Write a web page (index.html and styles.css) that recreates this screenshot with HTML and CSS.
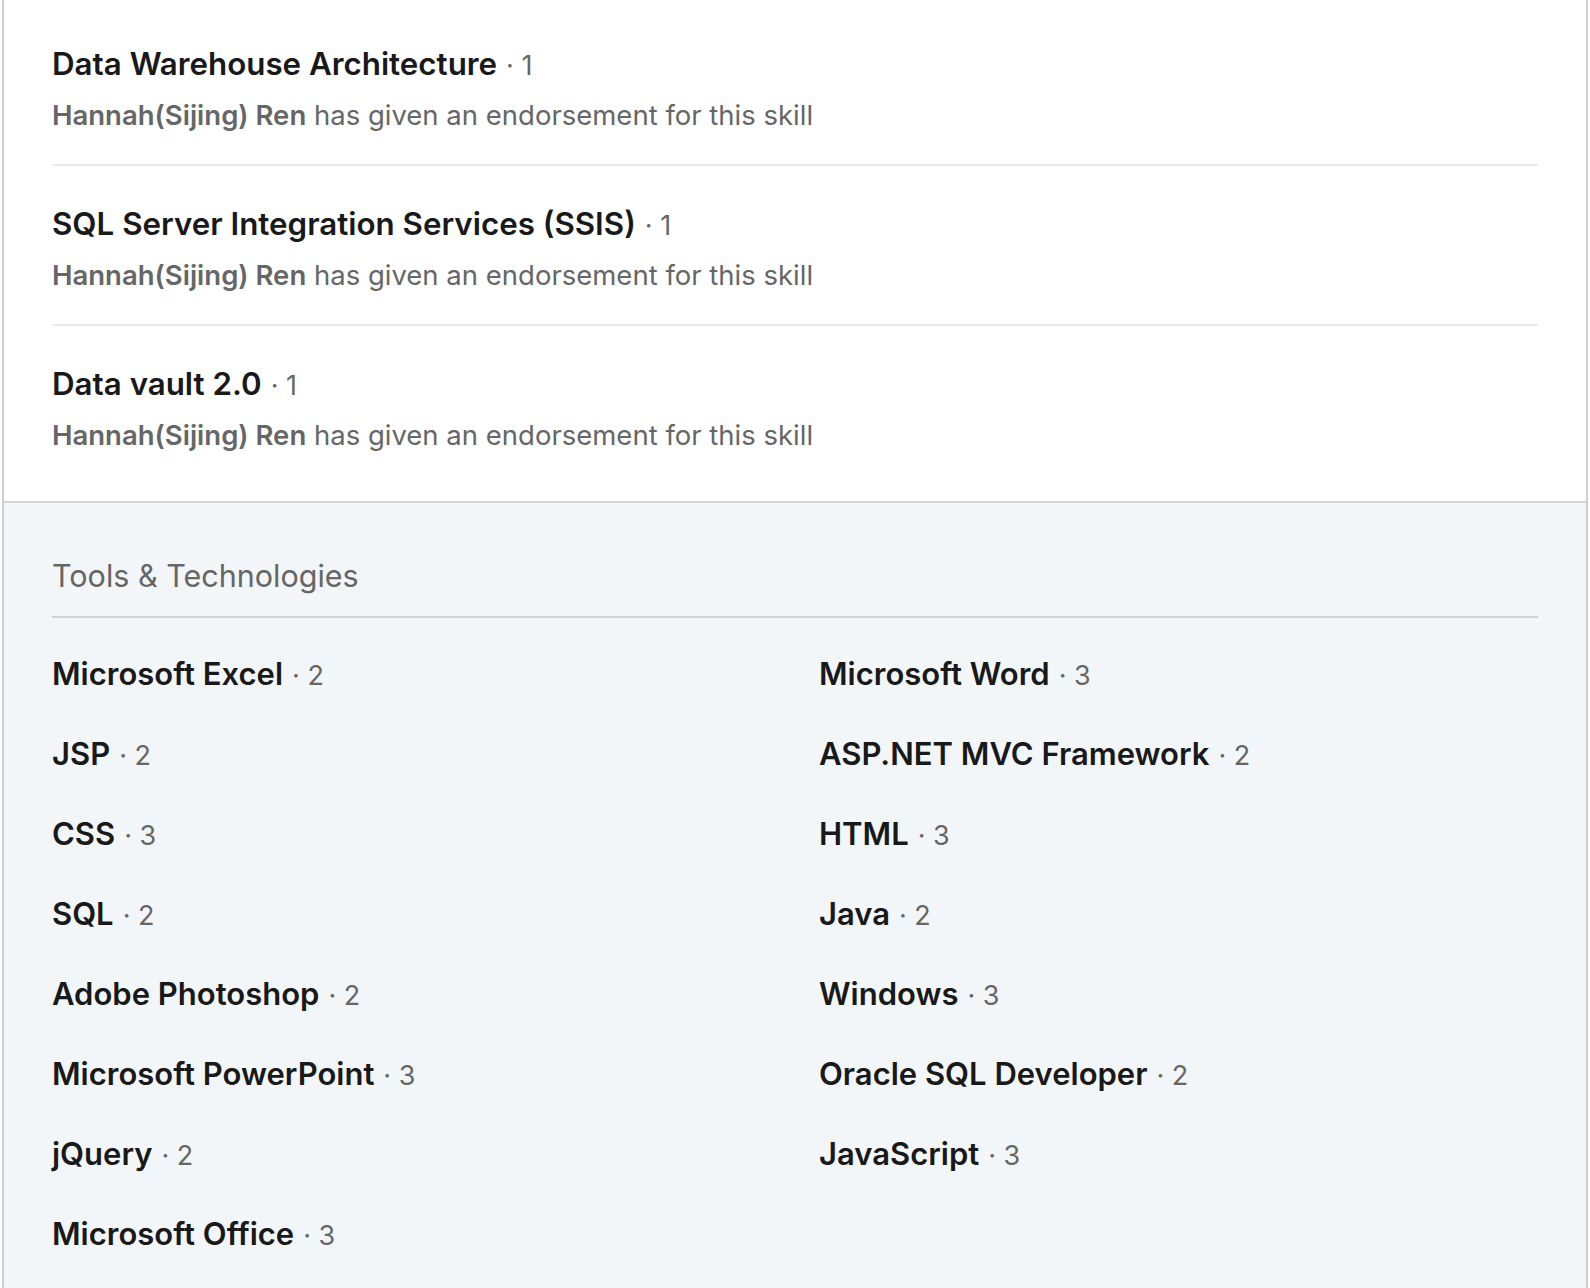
FILE: index.html
```html
<!DOCTYPE html>
<html lang="en">
<head>
<meta charset="utf-8">
<title>Skills</title>
<link rel="stylesheet" href="styles.css">
</head>
<body>
<div class="card">
  <ul class="endorse-list">
    <li class="endorse-item">
      <div class="skill-line"><span class="skill-name">Data Warehouse Architecture</span><span class="skill-count">· 1</span></div>
      <div class="endorse-sub"><strong>Hannah(Sijing) Ren</strong> has given an endorsement for this skill</div>
    </li>
    <li class="endorse-item">
      <div class="skill-line"><span class="skill-name">SQL Server Integration Services (SSIS)</span><span class="skill-count">· 1</span></div>
      <div class="endorse-sub"><strong>Hannah(Sijing) Ren</strong> has given an endorsement for this skill</div>
    </li>
    <li class="endorse-item">
      <div class="skill-line"><span class="skill-name">Data vault 2.0</span><span class="skill-count">· 1</span></div>
      <div class="endorse-sub"><strong>Hannah(Sijing) Ren</strong> has given an endorsement for this skill</div>
    </li>
  </ul>
  <section class="category">
    <h3 class="category-title">Tools &amp; Technologies</h3>
    <ul class="skill-grid">
      <li class="skill-line"><span class="skill-name">Microsoft Excel</span><span class="skill-count">· 2</span></li>
      <li class="skill-line"><span class="skill-name">Microsoft Word</span><span class="skill-count">· 3</span></li>
      <li class="skill-line"><span class="skill-name">JSP</span><span class="skill-count">· 2</span></li>
      <li class="skill-line"><span class="skill-name">ASP.NET MVC Framework</span><span class="skill-count">· 2</span></li>
      <li class="skill-line"><span class="skill-name">CSS</span><span class="skill-count">· 3</span></li>
      <li class="skill-line"><span class="skill-name">HTML</span><span class="skill-count">· 3</span></li>
      <li class="skill-line"><span class="skill-name">SQL</span><span class="skill-count">· 2</span></li>
      <li class="skill-line"><span class="skill-name">Java</span><span class="skill-count">· 2</span></li>
      <li class="skill-line"><span class="skill-name">Adobe Photoshop</span><span class="skill-count">· 2</span></li>
      <li class="skill-line"><span class="skill-name">Windows</span><span class="skill-count">· 3</span></li>
      <li class="skill-line"><span class="skill-name">Microsoft PowerPoint</span><span class="skill-count">· 3</span></li>
      <li class="skill-line"><span class="skill-name">Oracle SQL Developer</span><span class="skill-count">· 2</span></li>
      <li class="skill-line"><span class="skill-name">jQuery</span><span class="skill-count">· 2</span></li>
      <li class="skill-line"><span class="skill-name">JavaScript</span><span class="skill-count">· 3</span></li>
      <li class="skill-line"><span class="skill-name">Microsoft Office</span><span class="skill-count">· 3</span></li>
    </ul>
  </section>
</div>
</body>
</html>
```
FILE: styles.css
```css
html, body {
  margin: 0;
  padding: 0;
  background: #ffffff;
}
body {
  font-family: Inter, "Noto Sans", "Liberation Sans", sans-serif;
  color: #191919;
}
ul {
  list-style: none;
  margin: 0;
  padding: 0;
}
.card {
  margin: 0 2px;
  border-left: 2px solid #cfcfcf;
  border-right: 2px solid #cfcfcf;
  background: #ffffff;
  min-height: 1288px;
  display: flex;
  flex-direction: column;
}
.endorse-list {
  padding: 6px 48px 17px;
}
.endorse-item {
  padding: 36px 0 29px;
  border-bottom: 2px solid #e8eaec;
}
.endorse-item:last-child {
  border-bottom: none;
}
.skill-line {
  display: flex;
  align-items: baseline;
  height: 44px;
  line-height: 44px;
}
.endorse-list .skill-name {
  font-size: 31.3px;
}
.skill-name {
  font-size: 31px;
  font-weight: 600;
  color: #191919;
}
.skill-count {
  font-size: 27px;
  color: #666666;
  margin-left: 9px;
}
.endorse-sub {
  margin-top: 9px;
  line-height: 40px;
  font-size: 27.5px;
  color: #666666;
}
.endorse-sub strong {
  font-weight: 600;
}
.category {
  flex: 1;
  background: #f3f6f8;
  border-top: 2px solid #d3d6d9;
  padding: 53px 48px 0;
}
.category-title {
  margin: 0;
  font-size: 30.5px;
  font-weight: 400;
  line-height: 40px;
  color: #666666;
  padding-bottom: 20px;
  border-bottom: 2px solid #cfd2d5;
}
.skill-grid {
  display: grid;
  grid-template-columns: 1fr 1fr;
  column-gap: 48px;
  row-gap: 36px;
  padding-top: 34px;
}
```
